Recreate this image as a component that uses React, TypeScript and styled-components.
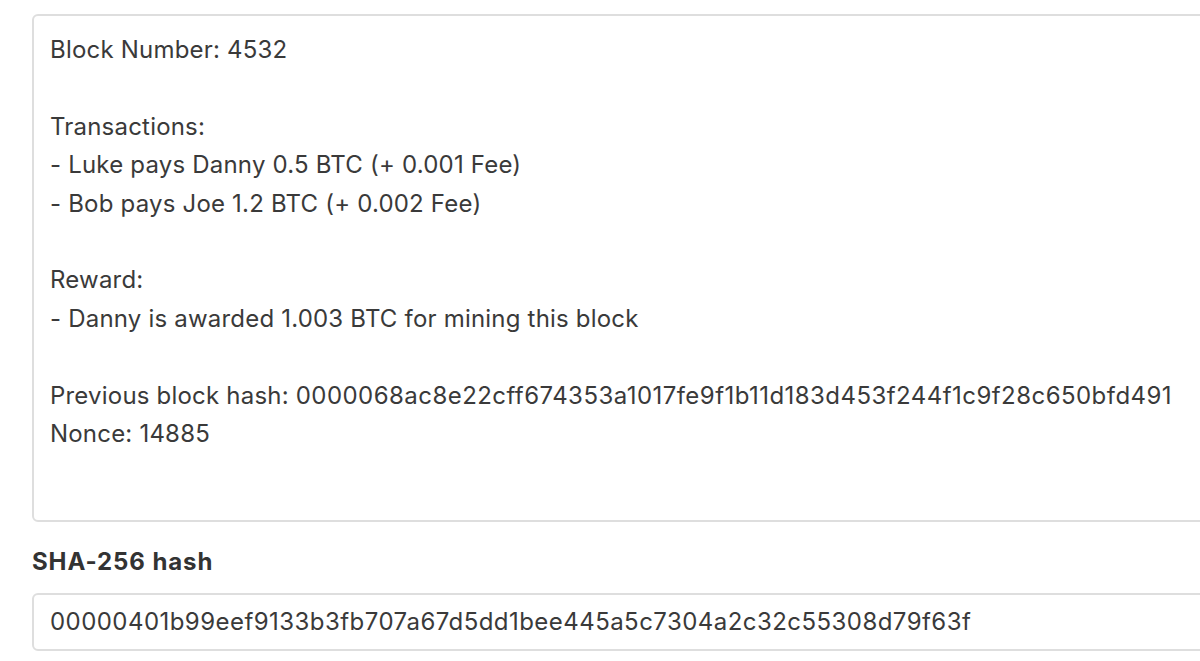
import React from "react";
import styled, { createGlobalStyle } from "styled-components";

const Global = createGlobalStyle`
  html, body {
    margin: 0;
    padding: 0;
    background: #ffffff;
    overflow: hidden;
  }
  body {
    font-family: Inter, "Noto Sans", "Liberation Sans", sans-serif;
    color: #333333;
  }
`;

const Page = styled.div`
  padding: 14px 0 0 32px;
  width: 1260px;
  box-sizing: border-box;
`;

const Field = styled.div`
  display: flex;
  flex-direction: column;
`;

const BlockData = styled.div`
  box-sizing: border-box;
  height: 508px;
  border: 2px solid #dedede;
  border-radius: 6px;
  padding: 15px 16px;
  font-size: 24px;
  line-height: 38.4px;
  letter-spacing: 0.2px;
  color: #3a3a3a;
  white-space: pre-wrap;
`;

const Hex = styled.span`
  letter-spacing: 0.45px;
`;

const Label = styled.label`
  margin-top: 21px;
  margin-bottom: 12px;
  font-size: 24px;
  line-height: 38.4px;
  font-weight: 700;
  letter-spacing: 0.9px;
  color: #333333;
`;

const HashBox = styled.div`
  box-sizing: border-box;
  height: 58px;
  border: 2px solid #dedede;
  border-radius: 6px;
  padding: 0 16px;
  display: flex;
  align-items: center;
  font-size: 24px;
  line-height: 38.4px;
  color: #3a3a3a;
`;

const blockText = `Block Number: 4532

Transactions:
- Luke pays Danny 0.5 BTC (+ 0.001 Fee)
- Bob pays Joe 1.2 BTC (+ 0.002 Fee)

Reward:
- Danny is awarded 1.003 BTC for mining this block

Previous block hash: `;

export default function App() {
  return (
    <>
      <Global />
      <Page>
        <Field>
          <BlockData>
            {blockText}
            <Hex>0000068ac8e22cff674353a1017fe9f1b11d183d453f244f1c9f28c650bfd491</Hex>
            {"\nNonce: 14885"}
          </BlockData>
          <Label>SHA-256 hash</Label>
          <HashBox>
            <Hex>00000401b99eef9133b3fb707a67d5dd1bee445a5c7304a2c32c55308d79f63f</Hex>
          </HashBox>
        </Field>
      </Page>
    </>
  );
}
